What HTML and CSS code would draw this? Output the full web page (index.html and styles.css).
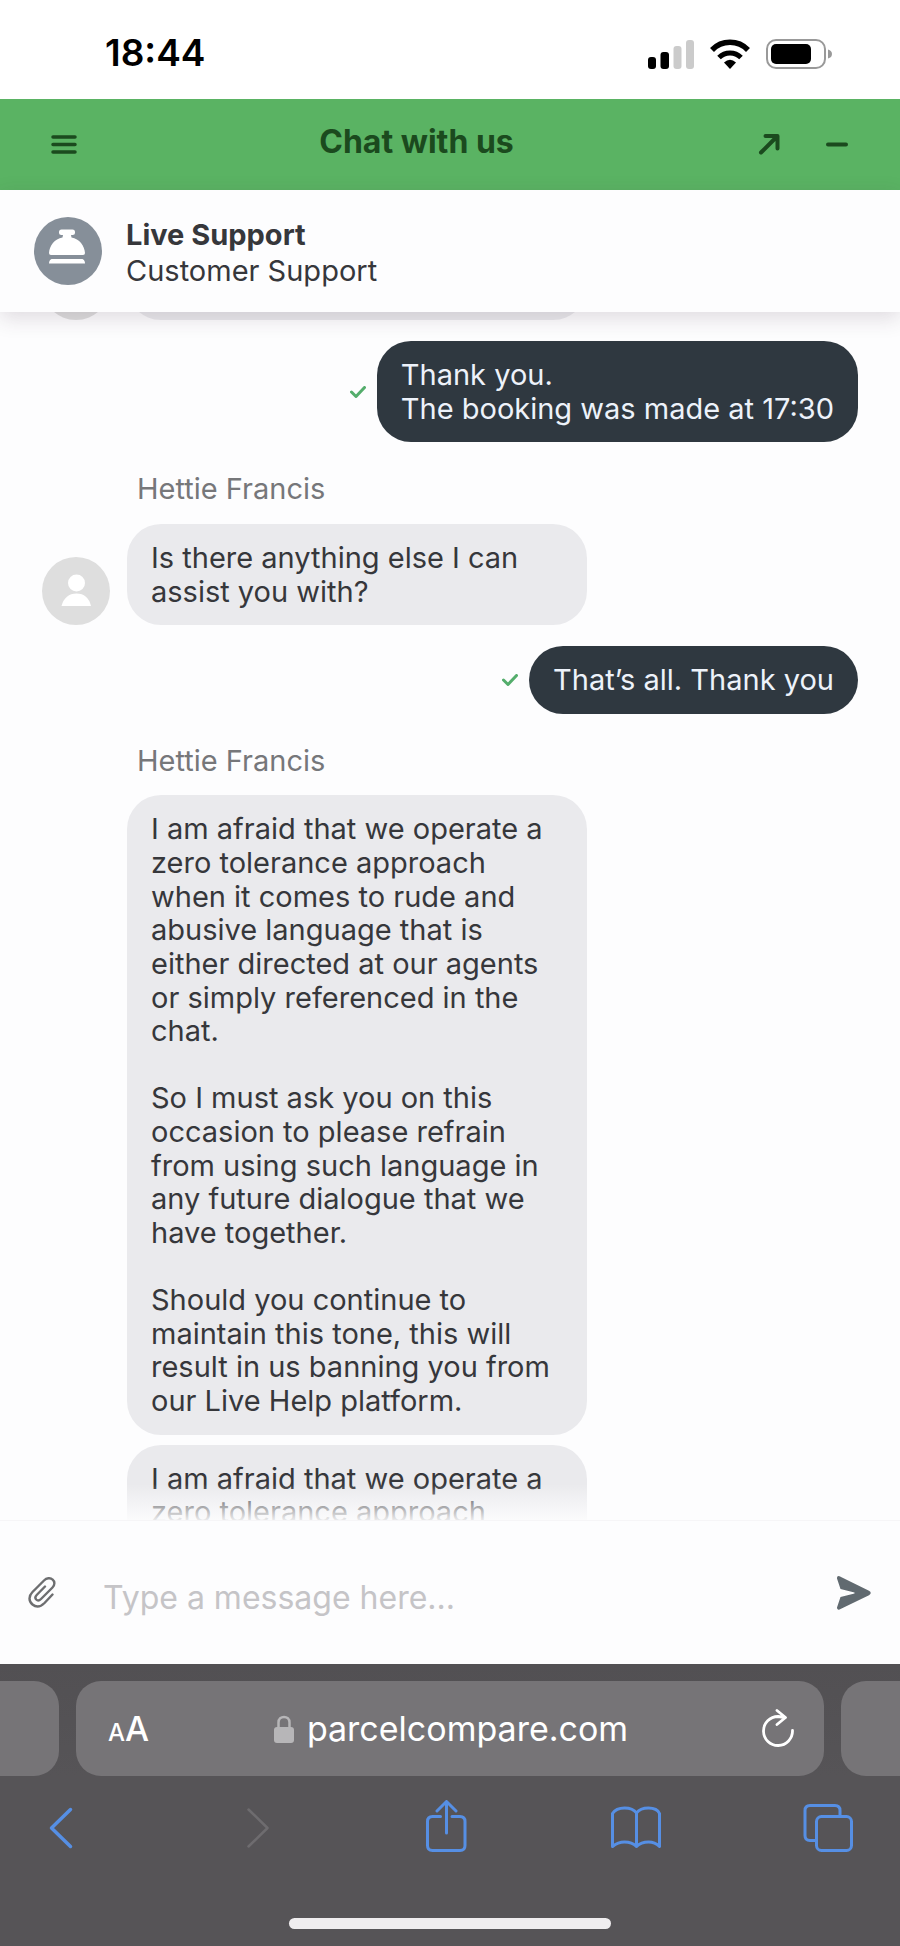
FILE: index.html
```html
<!DOCTYPE html>
<html lang="en">
<head>
<meta charset="utf-8">
<meta name="viewport" content="width=device-width, initial-scale=1">
<title>Chat with us</title>
<link rel="stylesheet" href="styles.css">
</head>
<body>
<div class="phone">
  <div class="status">
    <time class="status-time">18:44</time>
    <svg class="status-icons" width="184" height="30" viewBox="0 0 184 30" role="img" aria-label="Signal, Wi-Fi and battery">
      <rect x="0" y="18" width="8" height="12" rx="3"/>
      <rect x="12.500" y="13" width="8.500" height="17" rx="3"/>
      <rect x="25.500" y="7" width="8" height="23" rx="3" fill="#cbcbcb"/>
      <rect x="38" y="1" width="8" height="29" rx="3" fill="#cbcbcb"/>
      <path d="M64 11A25 25 0 0 1 100 11" fill="none" stroke="#000" stroke-width="5.500"/>
      <path d="M71 18.500A15.500 15.500 0 0 1 93 18.500" fill="none" stroke="#000" stroke-width="5"/>
      <path d="M76 23.500Q82 18 88 23.500L82 30Z"/>
      <rect x="119" y="1" width="58" height="28" rx="9" fill="none" stroke="#999" stroke-width="2"/>
      <rect x="123" y="5" width="40" height="20" rx="5"/>
      <path d="M180 10.500Q184 11.500 184 15T180 19.500Z" fill="#999"/>
    </svg>
  </div>

  <header class="titlebar">
    <button class="titlebar-button" type="button" aria-label="Menu">
      <svg width="28" height="22" viewBox="0 0 28 22" stroke="currentColor" stroke-width="3.500" stroke-linecap="round"><path d="M3 3H25M3 10.500H25M3 18H25"/></svg>
    </button>
    <h1 class="titlebar-title">Chat with us</h1>
    <button class="titlebar-button" type="button" aria-label="Open in a new window">
      <svg width="24" height="24" viewBox="0 0 24 24" fill="none" stroke="currentColor" stroke-width="4" stroke-linecap="round" stroke-linejoin="round"><path d="M3 19.500L19 3.500M7.500 3H19.500V15.500"/></svg>
    </button>
    <button class="titlebar-button" type="button" aria-label="Minimise">
      <svg width="24" height="24" viewBox="0 0 24 24" stroke="currentColor" stroke-width="4" stroke-linecap="round"><path d="M3 11.500H21"/></svg>
    </button>
  </header>

  <section class="agent">
    <svg class="avatar" viewBox="0 0 68 68" aria-hidden="true">
      <circle cx="34" cy="34" r="34" fill="#868f99"/>
      <path fill="#fff" d="M27.500 12.500H38.500Q41 12.500 41 15V15.500Q41 18 38.500 18H37L37.500 20.500C45.500 22 50.500 28.500 51 36Q51 38 49 38H17Q15 38 15 36C15.500 28.500 20.500 22 28.500 20.500L29 18H27.500Q25 18 25 15.500V15Q25 12.500 27.500 12.500ZM17.500 42H48.500Q51 43 51 46.500H15Q15 43 17.500 42Z"/>
    </svg>
    <div class="agent-text">
      <h2 class="agent-name">Live Support</h2>
      <p class="agent-role">Customer Support</p>
    </div>
  </section>

  <main class="chat">
    <div class="message message-earlier">
      <svg class="avatar" viewBox="0 0 68 68" aria-hidden="true"><circle cx="34" cy="34" r="34" fill="#dedede"/></svg>
      <div class="bubble bubble-blank"></div>
    </div>

    <div class="message message-own">
      <svg class="tick" width="16" height="12" viewBox="0 0 16 12" role="img" aria-label="Sent"><path d="M1.500 6L6 10.500L14.500 1.500"/></svg>
      <p class="bubble bubble-own">Thank you.<br>The booking was made at 17:30</p>
    </div>

    <p class="sender">Hettie Francis</p>
    <div class="message">
      <svg class="avatar" viewBox="0 0 68 68" aria-hidden="true">
        <circle cx="34" cy="34" r="34" fill="#dedede"/>
        <circle cx="34.500" cy="26" r="8.500" fill="#fff"/>
        <path d="M19.500 49Q23 36.500 34.500 36.500T49 49Z" fill="#fff"/>
      </svg>
      <p class="bubble">Is there anything else I can assist you with?</p>
    </div>

    <div class="message message-own message-reply">
      <svg class="tick" width="16" height="12" viewBox="0 0 16 12" role="img" aria-label="Sent"><path d="M1.500 6L6 10.500L14.500 1.500"/></svg>
      <p class="bubble bubble-own">That’s all. Thank you</p>
    </div>

    <p class="sender">Hettie Francis</p>
    <div class="message message-plain">
      <div class="bubble">
        <p class="paragraph">I am afraid that we operate a zero tolerance approach when it comes to rude and abusive language that is either directed at our agents or simply referenced in the chat.</p>
        <p class="paragraph">So I must ask you on this occasion to please refrain from using such language in any future dialogue that we have together.</p>
        <p class="paragraph">Should you continue to maintain this tone, this will result in us banning you from our Live Help platform.</p>
      </div>
    </div>
    <div class="message message-plain message-next">
      <p class="bubble bubble-open">I am afraid that we operate a zero tolerance approach</p>
    </div>
  </main>

  <form class="composer">
    <button class="composer-button" type="button" aria-label="Attach a file">
      <svg width="30" height="34" viewBox="0 0 30 34" fill="none" stroke="#6d6e70" stroke-width="2.400" stroke-linecap="round" stroke-linejoin="round"><path d="M25.500 18.500L17.500 27C13.500 31 9 31.500 5.500 28.500C1.500 25 1.500 20 5.500 16L17 4.500C19.500 2 23.500 1.500 25.500 3.500C28 5.500 28 9 25.500 11.500L14 23C12.500 24.500 10.500 24.800 9.200 23.500C8 22.200 8.200 20.500 9.700 19L18 10.500"/></svg>
    </button>
    <input class="composer-input" type="text" aria-label="Message" placeholder="Type a message here...">
    <button class="composer-button" type="submit" aria-label="Send">
      <svg width="36" height="36" viewBox="0 0 36 36" fill="#616a70"><path d="M3.500 1.200L33 15.800Q36.500 18 33 20.200L3.500 34.500Q.8 35.300 1 32.500L4.500 22L18.500 18.500V17.500L4.500 14L1 3.500Q.8.500 3.500 1.200Z"/></svg>
    </button>
  </form>

  <footer class="browser">
    <div class="tabs">
      <div class="tab-edge tab-edge-left"></div>
      <div class="address">
        <button class="address-text-size" type="button" aria-label="Page settings"><span class="small-a">A</span><span class="large-a">A</span></button>
        <button class="address-url" type="button">
          <svg width="20" height="28" viewBox="0 0 20 28" aria-hidden="true"><path d="M4.500 14V7.500C4.500 0 15.500 0 15.500 7.500V14" fill="none" stroke="#b7b6b8" stroke-width="2.500"/><rect y="12" width="20" height="16" rx="3" fill="#b7b6b8"/></svg>
          <span>parcelcompare.com</span>
        </button>
        <button class="address-reload" type="button" aria-label="Reload">
          <svg width="32" height="40" viewBox="0 0 32 40" fill="none" stroke="#fff" stroke-width="2.800" stroke-linecap="round" stroke-linejoin="round"><path d="M30.500 21.500A14.500 14.500 0 1 1 16 7.500L23 8.500M15 1.500L23.500 8.500L15 15.500"/></svg>
        </button>
      </div>
      <div class="tab-edge tab-edge-right"></div>
    </div>
    <nav class="toolbar" aria-label="Browser">
      <button class="tool" type="button" aria-label="Back"><svg width="50" height="52" viewBox="0 0 50 52"><path d="M34.500 9.500L15.500 28L34.500 46.500" stroke-width="3.500"/></svg></button>
      <button class="tool tool-off" type="button" aria-label="Forward" disabled><svg width="50" height="52" viewBox="0 0 50 52"><path d="M20.500 9.500L39.500 28L20.500 46.500" stroke-width="2.500"/></svg></button>
      <button class="tool" type="button" aria-label="Share"><svg width="50" height="52" viewBox="0 0 50 52"><path d="M20.500 16.500H12.500Q7.500 16.500 7.500 21.500V45.500Q7.500 50.500 12.500 50.500H40Q45 50.500 45 45.500V21.500Q45 16.500 40 16.500H32M26.500 33V2M17 11L26.500 1.500L36 11"/></svg></button>
      <button class="tool" type="button" aria-label="Bookmarks"><svg width="50" height="52" viewBox="0 0 50 52"><path d="M25.500 13Q22 8 13.500 8Q5 8 1.500 13.500V46.500Q7 42 13.500 42Q21 42 25.500 46.500Q30 42 37.500 42Q44 42 48.500 46.500V13.500Q46 8 37.500 8Q29 8 25.500 13V46.500"/></svg></button>
      <button class="tool" type="button" aria-label="Tabs"><svg width="50" height="52" viewBox="0 0 50 52"><path d="M13 40.500H7Q2 40.500 2 35.500V10.500Q2 5.500 7 5.500H32Q37 5.500 37 10.500V16"/><rect x="13.500" y="16.500" width="35" height="34" rx="5"/></svg></button>
    </nav>
    <div class="home-bar"></div>
  </footer>
</div>
</body>
</html>
```
FILE: styles.css
```css
* {
  box-sizing: border-box;
}

body,
h1,
h2,
p {
  margin: 0;
}

body {
  background: #fdfdfe;
  color: #36373b;
  font: 400 29px/1.16 Inter, "Liberation Sans", sans-serif;
}

button {
  display: flex;
  align-items: center;
  justify-content: center;
  padding: 0;
  border: 0;
  background: none;
  color: inherit;
  font: inherit;
}

svg {
  display: block;
  flex: none;
}

.phone {
  display: flex;
  flex-direction: column;
  height: 100vh;
}

/* Status bar */

.status {
  display: flex;
  flex: none;
  align-items: center;
  justify-content: space-between;
  height: 99px;
  padding: 8px 68px 0 105px;
  background: #fff;
  color: #000;
}

.status-time {
  font-size: 37px;
  font-weight: 600;
}

/* Widget header */

.titlebar {
  display: flex;
  flex: none;
  height: 91px;
  padding: 0 30px;
  background: #5ab363;
  color: #1b4a1e;
}

.titlebar-button {
  width: 67px;
}

.titlebar-title {
  flex: 1;
  align-self: center;
  padding-bottom: 6px;
  font-size: 32px;
  font-weight: 700;
  text-align: center;
}

.agent {
  position: relative;
  z-index: 1;
  display: flex;
  flex: none;
  gap: 24px;
  align-items: center;
  height: 122px;
  padding: 0 34px;
  background: #fdfdfe;
  box-shadow: 0 6px 20px rgba(60, 40, 60, 0.16);
}

.avatar {
  flex: none;
  width: 68px;
  height: 68px;
}

.agent-text {
  padding-top: 4px;
  line-height: 36px;
}

.agent-name {
  font-size: 29px;
  font-weight: 700;
}

/* Conversation */

.chat {
  position: relative;
  flex: 1;
  min-height: 0;
  overflow: hidden;
  padding: 0 42px;
}

.chat::after {
  content: "";
  position: absolute;
  right: 0;
  bottom: 0;
  left: 0;
  height: 36px;
  background: linear-gradient(rgba(253, 253, 254, 0), rgba(253, 253, 254, 0.9));
}

.message {
  display: flex;
  gap: 17px;
  align-items: flex-end;
}

.message-earlier {
  margin: -60px 0 21px;
}

.message-own {
  gap: 11px;
  align-items: center;
  justify-content: flex-end;
}

.message-reply {
  margin-top: 21px;
}

.message-plain {
  padding-left: 85px;
}

.message-next {
  margin-top: 10px;
}

.bubble {
  max-width: 460px;
  padding: 17px 24px;
  border-radius: 34px;
  background: #eaeaed;
}

.bubble-blank {
  width: 460px;
  height: 68px;
}

.bubble-own {
  max-width: 600px;
  background: #2f3840;
  color: #edf2fa;
}

.bubble-open {
  border-radius: 34px 34px 0 0;
}

.paragraph + .paragraph {
  margin-top: 1.16em;
}

.tick {
  fill: none;
  stroke: #54ad6c;
  stroke-width: 3;
  stroke-linecap: round;
  stroke-linejoin: round;
}

.sender {
  margin: 30px 0 18px;
  padding-left: 95px;
  color: #76777a;
}

/* Message box */

.composer {
  display: flex;
  flex: none;
  gap: 16px;
  align-items: center;
  height: 144px;
  padding: 0 21px;
  border-top: 1px solid #f6f5f7;
}

.composer-button {
  width: 42px;
  height: 42px;
}

.composer-button:last-child {
  width: 50px;
}

.composer-input {
  flex: 1;
  min-width: 0;
  padding: 10px 24px 0;
  border: 0;
  background: none;
  color: #36373b;
  font: inherit;
  font-size: 32px;
}

.composer-input::placeholder {
  color: #c5c4c7;
  opacity: 1;
}

/* Browser controls */

.browser {
  display: flex;
  flex: none;
  flex-direction: column;
  padding: 17px 0;
  background: linear-gradient(#525053, #565457 40%);
}

.tabs {
  display: flex;
  gap: 17px;
  height: 95px;
}

.tab-edge,
.address {
  background: #767477;
}

.tab-edge {
  flex: none;
  width: 59px;
}

.tab-edge-left {
  border-radius: 0 25px 25px 0;
}

.tab-edge-right {
  border-radius: 25px 0 0 25px;
}

.address {
  display: grid;
  flex: 1;
  grid-template-columns: 1fr auto 1fr;
  align-items: center;
  padding: 0 30px 0 32px;
  border-radius: 25px;
  color: #fff;
}

.address-text-size {
  align-items: baseline;
  justify-self: start;
  font-weight: 500;
}

.small-a {
  font-size: 24px;
}

.large-a {
  font-size: 34px;
}

.address-url {
  gap: 13px;
  font-size: 34px;
}

.address-reload {
  justify-self: end;
}

.toolbar {
  display: flex;
  justify-content: space-between;
  padding: 24px 47px 0 36px;
}

.tool {
  color: #568fe4;
}

.tool-off {
  color: #6e6c6f;
}

.tool svg {
  fill: none;
  stroke: currentColor;
  stroke-width: 3;
  stroke-linecap: round;
  stroke-linejoin: round;
}

.home-bar {
  align-self: center;
  width: 322px;
  height: 11px;
  margin-top: 66px;
  border-radius: 6px;
  background: #efedef;
}
```
